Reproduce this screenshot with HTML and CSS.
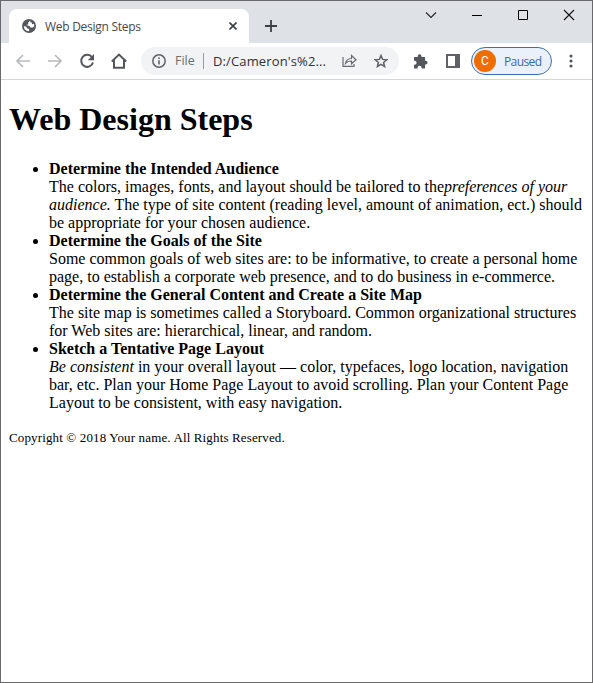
FILE: index.html
```html
<!DOCTYPE html>
<html lang="en">
<head>
<meta charset="utf-8">
<title>Web Design Steps</title>
<link rel="stylesheet" href="styles.css">
</head>
<body>
<div class="window">
  <header class="tabstrip">
    <div class="tab">
      <svg class="globe" width="14" height="14" viewBox="0 0 14 14"><circle cx="7" cy="7" r="7" fill="#54585d"/><path d="M8.3 1.600 6.200 3.400 6.300 5 4.700 6.300 7.400 7 8.300 8.600 11 8.500 12.300 7.100 12 5.100 10.200 5.200 9.700 3.600 8.300 3.200ZM1.700 7.200 4.100 7.500 5.300 9.400 7.200 9.900 7 12.300 4.500 11.800 2.600 10.200Z" fill="#fff"/></svg>
      <span class="tab-title">Web Design Steps</span>
      <svg class="tab-close" width="8" height="8" viewBox="0 0 8 8"><path d="M.5.5l7 7M7.5.5l-7 7" stroke="#3c4043" stroke-width="1.6"/></svg>
    </div>
    <svg class="new-tab" width="12" height="12" viewBox="0 0 12 12"><path d="M6 0v12M0 6h12" stroke="#3c4043" stroke-width="1.8"/></svg>
    <div class="controls">
      <svg width="46" height="29" viewBox="0 0 46 29"><path d="M18 11.5l5 5 5-5" fill="none" stroke="#222" stroke-width="1.1"/></svg>
      <svg width="46" height="29" viewBox="0 0 46 29"><path d="M18 14.5h10" stroke="#000"/></svg>
      <svg width="46" height="29" viewBox="0 0 46 29"><path d="M18.500 9.500h9v9h-9z" fill="none" stroke="#000"/></svg>
      <svg width="46" height="29" viewBox="0 0 46 29"><path d="M18 9l10 10M28 9l-10 10" stroke="#111" stroke-width="1.1"/></svg>
    </div>
  </header>
  <nav class="toolbar">
    <svg class="nav" width="32" height="36" viewBox="0 0 32 36"><path d="M29 18H16.500M22 12l-6 6 6 6" fill="none" stroke="#b9babc" stroke-width="1.7"/></svg>
    <svg class="nav" width="32" height="36" viewBox="0 0 32 36"><path d="M15 18h12.500M22 12l6 6-6 6" fill="none" stroke="#b9babc" stroke-width="1.7"/></svg>
    <svg class="nav" width="32" height="36" viewBox="0 0 32 36"><path d="M27 14.200A6 6 0 1 0 28 19.500" fill="none" stroke="#54585d" stroke-width="2"/><path d="M29 11v6.200h-6.200z" fill="#54585d"/></svg>
    <svg class="nav" width="32" height="36" viewBox="0 0 32 36"><path d="M14.800 18.500 22 11.600l7.200 6.900M17 17v7.800h10V17" fill="none" stroke="#54585d" stroke-width="2"/></svg>
    <div class="omnibox">
      <svg width="14" height="14" viewBox="0 0 14 14"><circle cx="7" cy="7" r="6.200" fill="none" stroke="#5f6368" stroke-width="1.500"/><path d="M7 6.200v4.300M7 3.500v1.600" stroke="#5f6368" stroke-width="1.600"/></svg>
      <span class="scheme">File</span>
      <span class="url">D:/Cameron's%2...</span>
      <svg class="share" width="15" height="14" viewBox="0 0 15 14"><path d="M1 3v9.300h11V10M3.500 9.500C4 6 6 4.600 9.500 4.500V1.500l4.500 4.300-4.500 4V7C6.500 7 5 7.600 3.500 9.500z" fill="none" stroke="#686c71" stroke-width="1.200"/></svg>
      <svg class="star" width="14" height="14" viewBox="0 0 14 14"><path d="M7 1.500l1.600 3.900 4.200.3-3.200 2.700 1 4.100L7 10.300l-3.600 2.200 1-4.100-3.200-2.700 4.200-.3z" fill="none" stroke="#5f6368" stroke-width="1.500"/></svg>
    </div>
    <svg class="puzzle" width="15" height="15" viewBox="0 0 15 15"><path d="M1 3h3.700v-.8a1.900 1.900 0 0 1 3.800 0V3h3.600v3.700h.6a1.800 1.800 0 0 1 0 3.700h-.6v4.100H8.600v-.8a2 2 0 0 0-4 0v.8H1v-3.700h.6a2 2 0 0 0 0-4H1z" fill="#54585d"/></svg>
    <svg class="panel" width="14" height="14" viewBox="0 0 14 14"><path d="M0 0h14v14H0zM2 2v10h7V2z" fill="#5f6165" fill-rule="evenodd"/></svg>
    <div class="profile"><span class="avatar">C</span><span class="paused">Paused</span></div>
    <svg class="dots" width="4" height="14" viewBox="0 0 4 14"><g fill="#54585d"><circle cx="2" cy="2" r="1.600"/><circle cx="2" cy="7" r="1.600"/><circle cx="2" cy="12" r="1.600"/></g></svg>
  </nav>
  <main class="page">
    <h1>Web Design Steps</h1>
    <ul>
      <li><strong>Determine the Intended Audience</strong><br>The colors, images, fonts, and layout should be tailored to the<em>preferences of your audience.</em> The type of site content (reading level, amount of animation, ect.) should be appropriate for your chosen audience.</li>
      <li><strong>Determine the Goals of the Site</strong><br>Some common goals of web sites are: to be informative, to create a personal home page, to establish a corporate web presence, and to do business in e-commerce.</li>
      <li><strong>Determine the General Content and Create a Site Map</strong><br>The site map is sometimes called a Storyboard. Common organizational structures for Web sites are: hierarchical, linear, and random.</li>
      <li><strong>Sketch a Tentative Page Layout</strong><br><em>Be consistent</em> in your overall layout — color, typefaces, logo location, navigation bar, etc. Plan your Home Page Layout to avoid scrolling. Plan your Content Page Layout to be consistent, with easy navigation.</li>
    </ul>
    <small>Copyright © 2018 Your name. All Rights Reserved.</small>
  </main>
</div>
</body>
</html>
```
FILE: styles.css
```css
* { box-sizing: border-box; }
body { margin: 0; background: #fff; }
svg { display: block; flex: none; }
.window { width: 593px; height: 683px; border: 1px solid #68686d; overflow: hidden; }
.tabstrip, .toolbar { font-family: "Open Sans", "Noto Sans", sans-serif; font-size: 12px; white-space: nowrap; }
.tabstrip { display: flex; height: 42px; padding-left: 8px; background: #dee1e6; }
.tab { display: flex; align-items: center; width: 240px; height: 34px; margin-top: 8px; padding: 0 12px 0 13px; background: #fff; border-radius: 8px 8px 0 0; }
.tab-title { margin-left: 9px; color: #45494d; letter-spacing: -0.28px; }
.tab-close { margin-left: auto; }
.new-tab { margin: 19px 0 0 16px; }
.controls { display: flex; margin-left: auto; }
.toolbar { display: flex; align-items: center; height: 37px; background: #fff; border-bottom: 1px solid #d5d6d8; }
.omnibox { display: flex; align-items: center; width: 258px; height: 28px; margin-left: 12px; padding: 0 11px; border-radius: 14px; background: #f1f3f4; }
.scheme { width: 29px; margin-left: 9px; border-right: 1px solid #9a9da0; line-height: 16px; font-size: 12.5px; color: #6b6f73; }
.url { margin-left: 9px; font-size: 13px; letter-spacing: 0.13px; color: #303236; }
.share { margin-left: auto; }
.star { margin-left: 17px; }
.puzzle { margin-left: 14px; }
.panel { margin-left: 18px; }
.profile { display: flex; align-items: center; width: 81px; height: 28px; margin-left: 11px; padding-left: 2px; border: 1px solid #3b6fb5; border-radius: 14px; background: #eaf1fb; }
.avatar { width: 22px; height: 22px; border-radius: 50%; background: #ef6c00; color: #fff; font: 12px/22px Roboto, sans-serif; text-align: center; }
.paused { margin-left: 8px; font-size: 12px; letter-spacing: -0.6px; color: #3d68b0; }
.dots { margin-left: 17px; }
.page { padding: 8px; font: 16px/18px "Liberation Serif", serif; color: #000; }
.page h1 { margin: 13px 0 22px; font-size: 32px; line-height: 37px; }
.page ul { margin: 0 0 17px; padding-left: 40px; }
.page small { display: block; font-size: 13px; letter-spacing: 0.14px; }
```
